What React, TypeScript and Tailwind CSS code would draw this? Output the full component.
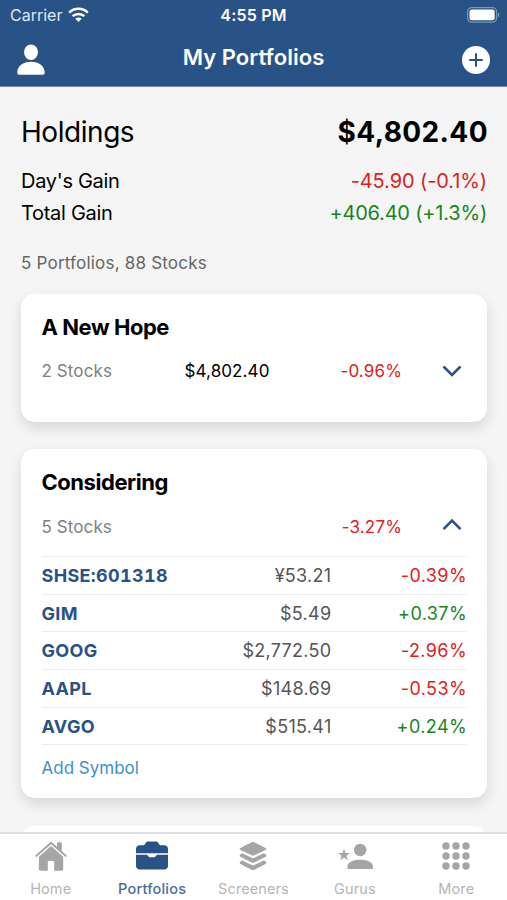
import React from 'react';

interface Stock {
  symbol: string;
  price: string;
  change: string;
}

interface Portfolio {
  name: string;
  count: string;
  value?: string;
  change: string;
  open: boolean;
  stocks: Stock[];
}

const portfolios: Portfolio[] = [
  { name: 'A New Hope', count: '2 Stocks', value: '$4,802.40', change: '-0.96%', open: false, stocks: [] },
  {
    name: 'Considering',
    count: '5 Stocks',
    change: '-3.27%',
    open: true,
    stocks: [
      { symbol: 'SHSE:601318', price: '¥53.21', change: '-0.39%' },
      { symbol: 'GIM', price: '$5.49', change: '+0.37%' },
      { symbol: 'GOOG', price: '$2,772.50', change: '-2.96%' },
      { symbol: 'AAPL', price: '$148.69', change: '-0.53%' },
      { symbol: 'AVGO', price: '$515.41', change: '+0.24%' },
    ],
  },
];

const changeColor = (change: string) => (change.startsWith('-') ? 'text-[#e02020]' : 'text-[#15861d]');

const WifiIcon = () => (
  <svg width="21" height="16" viewBox="0 0 21 16" fill="none" stroke="#fff" strokeWidth="2.5">
    <path d="M1.2 5.6C6.4.6 14.6.6 19.8 5.6" />
    <path d="M4.6 9.2c3.3-3.1 8.5-3.1 11.8 0" />
    <path d="M7.3 11.7c1.9-1.7 4.5-1.7 6.4 0L10.5 15z" fill="#fff" stroke="none" />
  </svg>
);

const BatteryIcon = () => (
  <svg width="33" height="16" viewBox="0 0 33 16">
    <rect x="0.6" y="0.6" width="29" height="14.6" rx="4.2" fill="none" stroke="#fff" strokeOpacity="0.4" strokeWidth="1.2" />
    <rect x="2.5" y="2.5" width="25.2" height="10.8" rx="2.5" fill="#fff" />
    <path d="M31 5.5c1.7.8 1.7 4 0 4.8z" fill="#fff" fillOpacity="0.45" />
  </svg>
);

const ProfileIcon = () => (
  <svg width="28" height="31" viewBox="0 0 28 31" fill="#fff">
    <ellipse cx="14" cy="8.2" rx="7" ry="7.7" />
    <path d="M.3 28.8C.3 22 6 17.8 14 17.8s13.7 4.200 13.7 11c0 1.300-.7 2-2 2H2.300c-1.300 0-2-.7-2-2z" />
  </svg>
);

const AddIcon = () => (
  <svg width="28" height="28" viewBox="0 0 28 28">
    <circle cx="14" cy="14" r="14" fill="#fff" />
    <path d="M14 8v12M8 14h12" stroke="#295287" strokeWidth="2" strokeLinecap="round" />
  </svg>
);

const Chevron = ({ open }: { open: boolean }) => (
  <svg width="20" height="14" viewBox="0 0 20 14" fill="none" stroke="#295287" strokeWidth="2.6">
    <path d={open ? 'M1.5 11.2 10 2.7l8.5 8.5' : 'M1.5 2.5 10 11l8.5-8.5'} />
  </svg>
);

const HomeIcon = () => (
  <svg width="32" height="30" viewBox="0 0 32 31" preserveAspectRatio="none" fill="#a5a5a5">
    <path d="M16 .6 22 6V2.200c0-.6.4-1 1-1h2.800c.6 0 1 .4 1 1v8.200l4.600 4.200c.6.6.5 1 .1 1.500s-1 .4-1.500 0L16 3.300 2 16.100c-.5.4-1 .5-1.500 0s-.4-1 .1-1.500z" />
    <path d="M16 5.100 28.200 16.200v13c0 .9-.6 1.500-1.500 1.500h-7.500v-9c0-.6-.4-1-1-1h-4.400c-.6 0-1 .4-1 1v9H5.400c-.9 0-1.500-.6-1.500-1.500v-13z" />
  </svg>
);

const BriefcaseIcon = () => (
  <svg width="34" height="29" viewBox="0 0 34 29" fill="#295287">
    <path d="M1 12.200V8.200C1 5.700 2.400 4.300 4.800 4.300h3.300c.7 0 1.200-.3 1.600-.9l.9-1.400C11.300.9 12.100.5 13.500.5h7c1.400 0 2.200.4 2.900 1.500l.9 1.400c.4.6.9.9 1.600.9h3.300C31.600 4.300 33 5.700 33 8.200v4z" />
    <path d="M1 13.800h10.600c.6 0 .9.2 1.200.8.5 1.200 1.100 1.600 2.200 1.600h4c1.100 0 1.700-.4 2.200-1.600.3-.6.6-.8 1.200-.8H33v10.900c0 2.400-1.400 3.800-3.800 3.800H4.800C2.400 28.500 1 27.100 1 24.700z" />
  </svg>
);

const LayersIcon = () => (
  <svg width="28" height="30" viewBox="0 0 30 30" preserveAspectRatio="none" fill="#a5a5a5">
    <path d="M1.500 7 13.600 1.300c.9-.4 1.900-.4 2.800 0L28.500 7c1 .5 1 1.500 0 2l-12.100 5.200c-.9.4-1.900.4-2.800 0L1.500 9c-1-.5-1-1.500 0-2z" />
    <path d="M3.500 12.300 13.600 16.800c.9.4 1.900.4 2.800 0l10.100-4.500 2 1c1 .5 1 1.900 0 2.400l-12.100 5.700c-.9.4-1.900.4-2.800 0L1.500 15.700c-1-.5-1-1.900 0-2.400z" />
    <path d="M3.500 19.600 13.600 24.100c.9.400 1.900.4 2.800 0l10.100-4.500 2 1c1 .5 1 1.900 0 2.400l-12.100 5.700c-.9.4-1.900.4-2.800 0L1.500 23c-1-.5-1-1.900 0-2.400z" />
  </svg>
);

const GuruIcon = () => (
  <svg width="36" height="28" viewBox="0 0 36 28" fill="#a5a5a5">
    <circle cx="23.2" cy="8" r="6.2" />
    <path d="M10.5 27v-2.800c0-4.500 7.200-6.400 12.700-6.400s12.700 1.900 12.700 6.400V27z" />
    <path d="M7 6.700 8.500 11h4.500l-3.600 2.700 1.300 4.500L7 15.600l-3.700 2.600 1.300-4.500L1 11h4.500z" />
  </svg>
);

const GridIcon = () => (
  <svg width="28" height="28" viewBox="0 0 28 28" fill="#a5a5a5">
    {[4, 14, 24].map((y) => [4, 14, 24].map((x) => <circle key={`${x}-${y}`} cx={x} cy={y} r="3.7" />))}
  </svg>
);

const tabs = [
  { label: 'Home', icon: HomeIcon },
  { label: 'Portfolios', icon: BriefcaseIcon },
  { label: 'Screeners', icon: LayersIcon },
  { label: 'Gurus', icon: GuruIcon },
  { label: 'More', icon: GridIcon },
];

const Header = () => (
  <header className="h-[87px] shrink-0 bg-[#295287] text-white border-b border-[#6f88ab]">
    <div className="h-[30px] px-2.5 grid grid-cols-3 items-center">
      <div className="flex items-center gap-[6px]">
        <span className="text-[16px] text-[#dfe8f5]">Carrier</span>
        <WifiIcon />
      </div>
      <span className="text-center text-[16px] font-semibold tracking-[0.2px]">4:55 PM</span>
      <div className="flex justify-end -mr-[3px]">
        <BatteryIcon />
      </div>
    </div>
    <div className="h-[56px] px-[17px] flex items-center justify-between">
      <div className="pt-[2px]">
        <ProfileIcon />
      </div>
      <h1 className="text-[22px] leading-[30px] font-semibold pb-[3px] tracking-[0.05px]">My Portfolios</h1>
      <div className="pt-[3px]">
        <AddIcon />
      </div>
    </div>
  </header>
);

const Summary = () => (
  <section className="h-[206.5px] pl-[21px] pr-5 pt-[27px]">
    <div className="flex items-center justify-between h-[36px]">
      <h2 className="text-[28px] tracking-[-0.45px]">Holdings</h2>
      <span className="text-[28px] font-bold tracking-[0.4px] -mr-[1px]">$4,802.40</span>
    </div>
    <div className="flex items-center justify-between h-[32px] mt-[15px] text-[20px]">
      <span className="tracking-[-0.3px]">Day's Gain</span>
      <span className="text-[#e02020] tracking-[-0.1px]">-45.90 (-0.1%)</span>
    </div>
    <div className="flex items-center justify-between h-[32px] text-[20px]">
      <span className="tracking-[-0.3px]">Total Gain</span>
      <span className="text-[#15861d] tracking-[-0.2px]">+406.40 (+1.3%)</span>
    </div>
    <p className="mt-[22px] text-[17px] leading-6 tracking-[0.2px] text-[#666]">5 Portfolios, 88 Stocks</p>
  </section>
);

const PortfolioCard: React.FC<{ portfolio: Portfolio }> = ({ portfolio }) => {
  const { name, count, value, change, open, stocks } = portfolio;

  return (
    <article className="bg-white rounded-[14px] pl-[20.5px] pr-5 pt-[18px] shadow-[0_6px_14px_rgba(0,0,0,0.12)]">
      <h3 className="text-[22px] leading-[31px] font-bold tracking-[-0.45px]">{name}</h3>
      <div className="mt-[12px] h-[32px] flex items-center text-[17px]">
        <span className="w-[127px] pt-[3px] text-[#808080] tracking-[0.1px]">{count}</span>
        <span className="w-[101px] pt-[3px] text-right text-black tracking-[0.1px]">{value}</span>
        <span className={`flex-1 pt-[3px] text-right tracking-[0.15px] ${changeColor(change)}`}>{change}</span>
        <div className={`w-[65px] pr-[5px] flex justify-end ${open ? 'pb-[2px]' : ''}`}>
          <Chevron open={open} />
        </div>
      </div>
      {open ? (
        <div className="mt-[14px] pb-[10px]">
          <ul className="border-t border-[#ececec]">
            {stocks.map((stock) => (
              <li key={stock.symbol} className="h-[37.7px] flex items-center border-b border-[#ececec] text-[18px]">
                <span className="w-[140px] font-bold text-[#295287] tracking-[0.35px] tabular-nums">{stock.symbol}</span>
                <span className="w-[150px] text-right tracking-[0.3px] text-[#555]">{stock.price}</span>
                <span className={`flex-1 text-right tracking-[0.4px] ${changeColor(stock.change)}`}>{stock.change}</span>
              </li>
            ))}
          </ul>
          <button className="block h-[43px] pt-[3px] text-[17px] text-[#3d8fd1]">Add Symbol</button>
        </div>
      ) : (
        <div className="h-[35px]" />
      )}
    </article>
  );
};

const TabBar = () => (
  <nav className="h-[68px] shrink-0 bg-white border-t-2 border-[#dfdfdf] grid grid-cols-5">
    {tabs.map(({ label, icon: Icon }) => (
      <div key={label} className="flex flex-col items-center">
        <div className="h-[43px] flex items-center">
          <Icon />
        </div>
        <span
          className={`mt-[1px] text-[14.5px] leading-[21px] ${label === 'Portfolios' ? 'font-medium tracking-[0.2px] text-[#4a6d9b]' : 'tracking-[0.1px] text-[#b5b5b5]'}`}
        >
          {label}
        </span>
      </div>
    ))}
  </nav>
);

const App = () => (
  <div className="w-[507px] h-[900px] flex flex-col overflow-hidden bg-[#f5f5f5] text-black font-['Inter',sans-serif]">
    <Header />
    <main className="flex-1 min-h-0 overflow-hidden">
      <Summary />
      <div className="pl-[21px] pr-5 flex flex-col gap-[27.5px]">
        {portfolios.map((portfolio) => (
          <PortfolioCard key={portfolio.name} portfolio={portfolio} />
        ))}
        <div className="h-[80px] bg-white rounded-[14px]" />
      </div>
    </main>
    <TabBar />
  </div>
);

export default App;
